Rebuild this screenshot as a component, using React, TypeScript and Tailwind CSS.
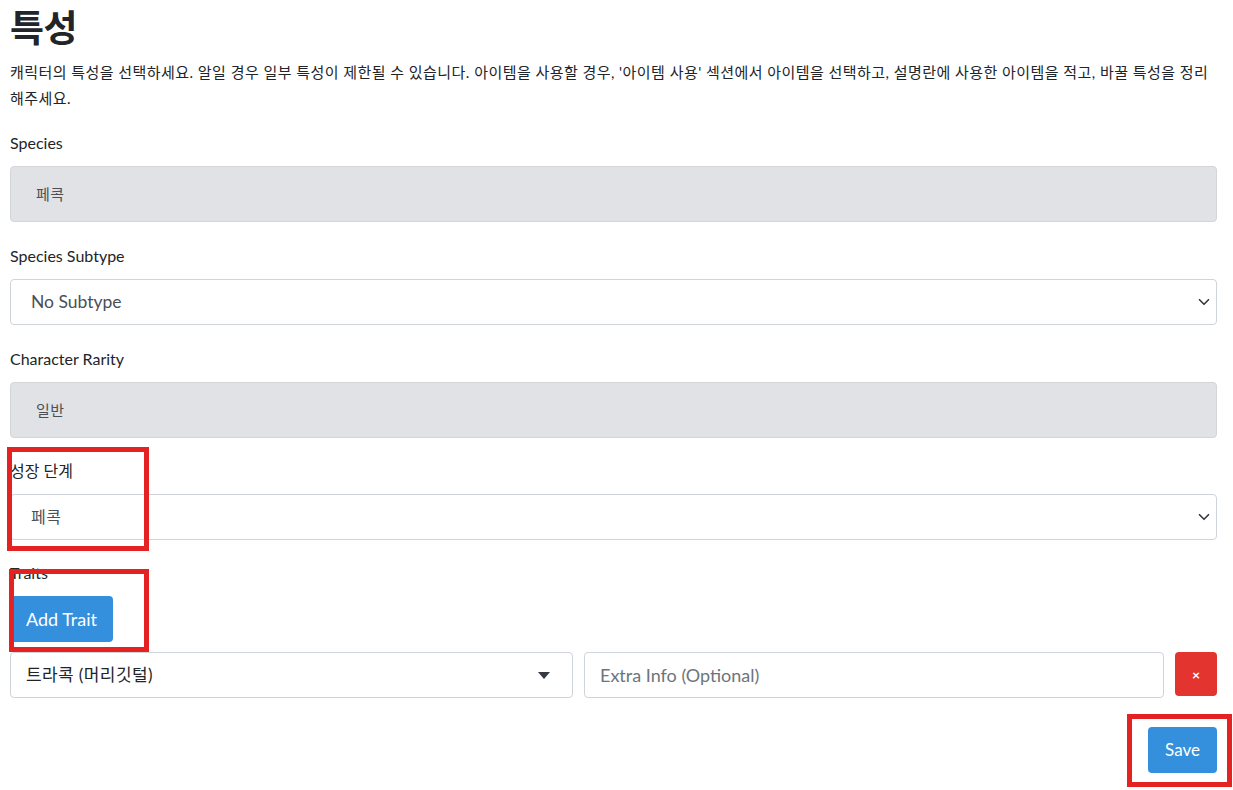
import React from "react";

const font = { fontFamily: '"Lato", "Noto Sans CJK KR", sans-serif' };

function Chevron() {
  return (
    <svg width="12" height="12" viewBox="0 0 16 16" className="text-[#343a40]">
      <path d="M2 5l6 6 6-6" fill="none" stroke="currentColor" strokeWidth="2.2" strokeLinecap="round" strokeLinejoin="round" />
    </svg>
  );
}

function Label({ children }: { children: React.ReactNode }) {
  return <div className="text-[16px] leading-[24px] text-[#212529] mb-[11px]">{children}</div>;
}

export default function App() {
  return (
    <div className="relative bg-white min-h-[790px] pl-[10px] pr-[16px]" style={font}>
      <h1 className="pt-[6px] text-[37px] leading-[44px] font-bold text-[#212529] tracking-[-0.5px]">특성</h1>
      <p className="mt-[9px] text-[15px] leading-[26px] text-[#212529] whitespace-nowrap tracking-[0.45px]">
        캐릭터의 특성을 선택하세요. 알일 경우 일부 특성이 제한될 수 있습니다. 아이템을 사용할 경우, '아이템 사용' 섹션에서 아이템을 선택하고, 설명란에 사용한 아이템을 적고, 바꿀 특성을 정리
        <br />
        해주세요.
      </p>

      <div className="mt-[20px] mb-[22px]">
        <Label>Species</Label>
        <div className="h-[56px] rounded-[4px] border border-[#d3d5d8] bg-[#e1e2e5] flex items-center pl-[25px] text-[15px] text-[#495057] tracking-[0.4px]">
          페콕
        </div>
      </div>

      <div className="mb-[22px]">
        <Label>Species Subtype</Label>
        <div className="h-[46px] rounded-[4px] border border-[#ced4da] bg-white flex items-center justify-between pl-[20px] pr-[6px] text-[17.5px] text-[#495057]">
          <span>No Subtype</span>
          <Chevron />
        </div>
      </div>

      <div className="mb-[21px]">
        <Label>Character Rarity</Label>
        <div className="h-[56px] rounded-[4px] border border-[#d3d5d8] bg-[#e1e2e5] flex items-center pl-[25px] text-[15px] text-[#495057] tracking-[0.4px]">
          일반
        </div>
      </div>

      <div className="mb-[21px]">
        <Label>성장 단계</Label>
        <div className="h-[46px] rounded-[4px] border border-[#ced4da] bg-white flex items-center justify-between pl-[20px] pr-[6px] text-[16px] text-[#495057] tracking-[0.5px]">
          <span>페콕</span>
          <Chevron />
        </div>
      </div>

      <div>
        <div className="text-[16px] leading-[24px] text-[#212529] mb-[11px]">Traits</div>
        <div>
          <button className="h-[46px] px-[16px] rounded-[4px] bg-[#3490dc] text-white text-[18px]">Add Trait</button>
        </div>
        <div className="mt-[10px] flex gap-[11px] items-start">
          <div className="w-[563px] h-[46px] rounded-[4px] border border-[#ced4da] bg-white flex items-center justify-between pl-[15px] pr-[22px] text-[17px] text-[#212529] tracking-[0.4px]">
            <span>트라콕 (머리깃털)</span>
            <svg width="12" height="7" viewBox="0 0 12 7"><path d="M0 0h12L6 7z" fill="#343a40" /></svg>
          </div>
          <div className="flex-1 h-[46px] rounded-[4px] border border-[#ced4da] bg-white flex items-center pl-[15px] text-[18px] text-[#6c757d]">
            Extra Info (Optional)
          </div>
          <button className="w-[42px] h-[44px] rounded-[4px] bg-[#e3342f] text-white text-[14px] font-bold flex items-center justify-center">×</button>
        </div>
        <div className="mt-[29px] flex justify-end">
          <button className="h-[46px] w-[69px] rounded-[4px] bg-[#3490dc] text-white text-[17px]">Save</button>
        </div>
      </div>

      <div className="absolute left-[7px] top-[447px] w-[142px] h-[104px] border-[5px] border-[#e52222] pointer-events-none" />
      <div className="absolute left-[9px] top-[569px] w-[140px] h-[83px] border-[5px] border-[#e52222] pointer-events-none" />
      <div className="absolute left-[1127px] top-[714px] w-[105px] h-[73px] border-[5px] border-[#e52222] pointer-events-none" />
    </div>
  );
}
